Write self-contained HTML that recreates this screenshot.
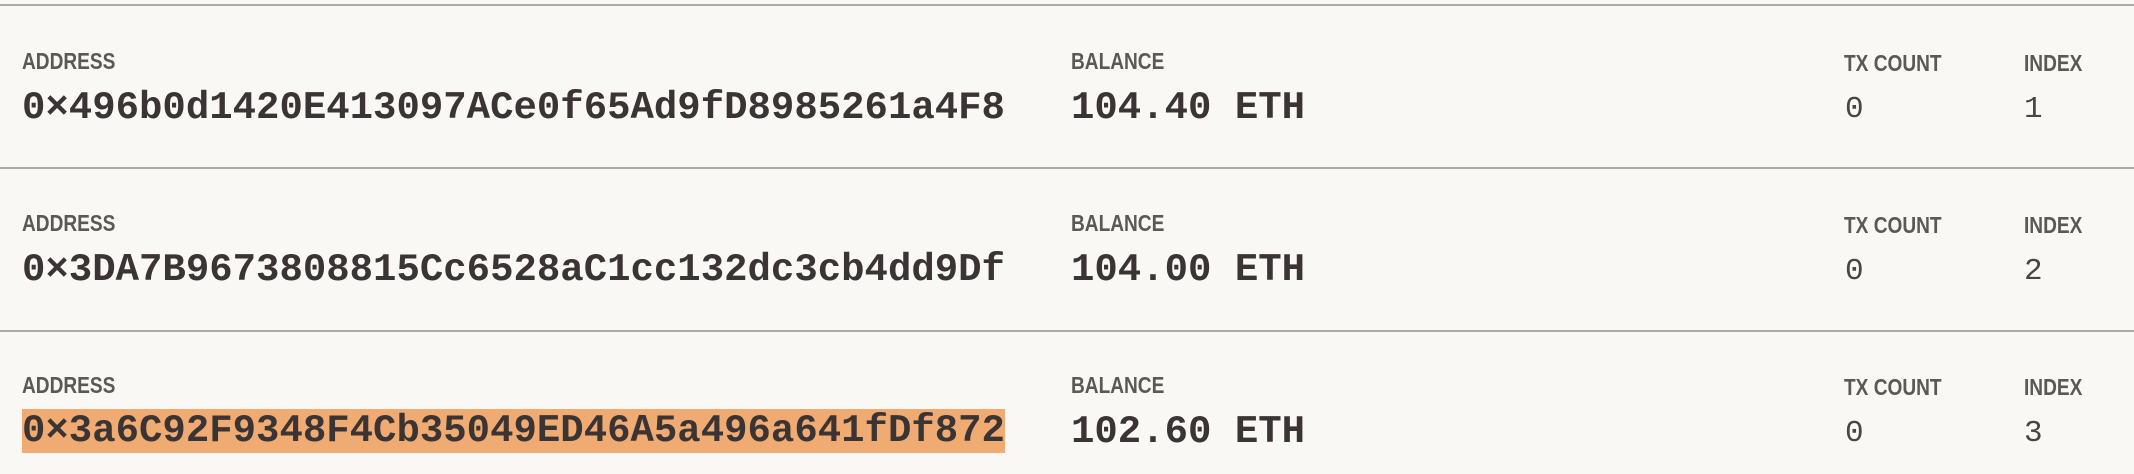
<!DOCTYPE html>
<html><head><meta charset="utf-8"><style>
html,body{margin:0;padding:0;}
body{width:2134px;height:474px;background:#f9f8f4;position:relative;overflow:hidden;}
.line{position:absolute;left:0;width:2134px;height:2px;background:#acaaa8;}
.lab{position:absolute;font-family:"Liberation Sans Narrow","Liberation Sans",sans-serif;font-size:23px;line-height:23px;color:#5b5955;font-weight:bold;transform:scaleX(0.83);transform-origin:left;}
.val{position:absolute;font-family:"Liberation Mono",monospace;font-size:39px;line-height:44px;color:#3b3434;font-weight:bold;white-space:pre;}
.sm{font-weight:normal;font-size:31px;color:#4a4444;}
.hl{background:#f0ab72;}
</style></head><body>
<div class="line" style="top:4px"></div>
<div class="line" style="top:167px"></div>
<div class="line" style="top:330px"></div>

<div class="lab" style="left:22px;top:50px">ADDRESS</div>
<div class="lab" style="left:1071px;top:50px">BALANCE</div>
<div class="lab" style="left:1844px;top:52px">TX COUNT</div>
<div class="lab" style="left:2024px;top:52px">INDEX</div>
<div class="val" style="left:22px;top:86px">0×496b0d1420E413097ACe0f65Ad9fD8985261a4F8</div>
<div class="val" style="left:1071px;top:86px">104.40 ETH</div>
<div class="val sm" style="left:1845px;top:88px">0</div>
<div class="val sm" style="left:2024px;top:88px">1</div>

<div class="lab" style="left:22px;top:212px">ADDRESS</div>
<div class="lab" style="left:1071px;top:212px">BALANCE</div>
<div class="lab" style="left:1844px;top:214px">TX COUNT</div>
<div class="lab" style="left:2024px;top:214px">INDEX</div>
<div class="val" style="left:22px;top:248px">0×3DA7B9673808815Cc6528aC1cc132dc3cb4dd9Df</div>
<div class="val" style="left:1071px;top:248px">104.00 ETH</div>
<div class="val sm" style="left:1845px;top:250px">0</div>
<div class="val sm" style="left:2024px;top:250px">2</div>

<div class="lab" style="left:22px;top:374px">ADDRESS</div>
<div class="lab" style="left:1071px;top:374px">BALANCE</div>
<div class="lab" style="left:1844px;top:376px">TX COUNT</div>
<div class="lab" style="left:2024px;top:376px">INDEX</div>
<div class="val" style="left:22px;top:409px"><span class="hl">0×3a6C92F9348F4Cb35049ED46A5a496a641fDf872</span></div>
<div class="val" style="left:1071px;top:410px">102.60 ETH</div>
<div class="val sm" style="left:1845px;top:412px">0</div>
<div class="val sm" style="left:2024px;top:412px">3</div>
</body></html>
